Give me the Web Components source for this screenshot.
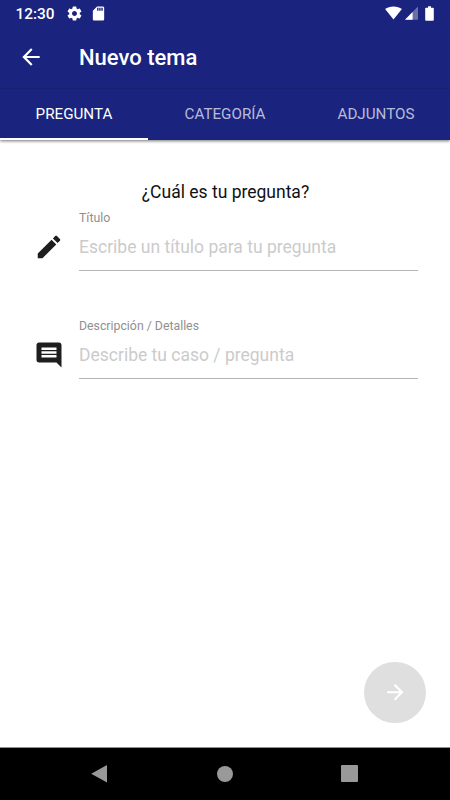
<!DOCTYPE html>
<html lang="es"><head><meta charset="utf-8"><title>Nuevo tema</title>
<style>html,body{margin:0;height:100%}body{font-family:Roboto,"Liberation Sans",sans-serif;background:#fff;overflow:hidden}</style>
</head><body>
<topic-screen></topic-screen>
<script>
function define(name, html) {
  const t = document.createElement('template');
  t.innerHTML = html;
  customElements.define(name, class extends HTMLElement {
    constructor() {
      super();
      this.attachShadow({mode: 'open'}).append(t.content.cloneNode(true));
    }
  });
}

define('status-bar', `
<style>
:host{display:flex;align-items:center;height:26px;padding:0 16px 0 15.5px;box-sizing:border-box;color:#fff}
.time{font-size:15.4px;line-height:26px;width:50px;font-weight:500;padding-top:2px}
svg{display:block;fill:#fff}
.sd{margin-left:7px}.wifi{margin-left:auto}.cell{margin-left:3px}.bat{margin-left:7px}
</style>
<span class="time">12:30</span>
<svg width="17" height="17" viewBox="0 0 24 24"><path d="M19.43 12.98c.04-.32.07-.64.07-.98s-.03-.66-.07-.98l2.11-1.65c.19-.15.24-.42.12-.64l-2-3.46c-.12-.22-.39-.3-.61-.22l-2.49 1c-.52-.4-1.08-.73-1.69-.98l-.38-2.65C14.46 2.18 14.25 2 14 2h-4c-.25 0-.46.18-.49.42l-.38 2.65c-.61.25-1.17.59-1.69.98l-2.49-1c-.23-.09-.49 0-.61.22l-2 3.46c-.13.22-.07.49.12.64l2.11 1.65c-.04.32-.07.65-.07.98s.03.66.07.98l-2.11 1.65c-.19.15-.24.42-.12.64l2 3.46c.12.22.39.3.61.22l2.49-1c.52.4 1.08.73 1.69.98l.38 2.65c.03.24.24.42.49.42h4c.25 0 .46-.18.49-.42l.38-2.65c.61-.25 1.17-.59 1.69-.98l2.49 1c.23.09.49 0 .61-.22l2-3.46c.12-.22.07-.49-.12-.64l-2.11-1.65zM12 15.5c-1.93 0-3.5-1.57-3.5-3.5s1.57-3.5 3.5-3.5 3.5 1.57 3.5 3.5-1.57 3.5-3.5 3.5z"/></svg>
<svg class="sd" width="17" height="17" viewBox="0 0 24 24"><path d="M18 2h-8L4.02 8 4 20c0 1.1.9 2 2 2h12c1.1 0 2-.9 2-2V4c0-1.1-.9-2-2-2zm-6 6h-2V4h2v4zm3 0h-2V4h2v4zm3 0h-2V4h2v4z"/></svg>
<svg class="wifi" width="17" height="14" viewBox="0 0 17 14"><path d="M8.5 13.5 16.9 3.1C14.7 1.4 11.8.4 8.5.4S2.3 1.4.1 3.1z"/></svg>
<svg class="cell" width="13" height="14" viewBox="0 0 13 14"><path opacity=".35" d="M0 13.7 13 .5v13.2z"/><path d="M0 13.7 7.6 6v7.7z"/></svg>
<svg class="bat" width="9" height="15" viewBox="0 0 9 15"><path d="M3 .3h3v1.5h2c.5 0 .8.3.8.8v11.2c0 .5-.3.9-.8.9H1c-.5 0-.8-.4-.8-.9V2.600c0-.5.3-.8.8-.8h2z"/></svg>
`);

define('app-bar', `
<style>
:host{display:flex;align-items:center;height:61.500px;padding-left:17.500px;box-sizing:border-box;color:#fff}
svg{display:block;fill:#fff;margin-right:35.500px}
h1{font-size:22px;font-weight:500;line-height:30px;margin:3px 0 0}
</style>
<svg width="26" height="26" viewBox="0 0 24 24"><path d="M20 11H7.830l5.590-5.590L12 4l-8 8 8 8 1.410-1.410L7.830 13H20v-2z"/></svg>
<h1><slot></slot></h1>
`);

define('tab-item', `
<style>
:host{display:flex;align-items:center;justify-content:center;box-sizing:border-box;height:51.500px;padding-top:1.500px;font-size:15.2px;color:rgba(255,255,255,.7);border-bottom:2px solid transparent}
:host([selected]){color:#fff;border-bottom-color:#fff}
</style><slot></slot>`);

define('tab-bar', `
<style>
:host{display:grid;grid-template-columns:148px 154px 148px;height:52.500px;box-sizing:border-box;border-top:1px solid #191f73}
</style><slot></slot>`);

define('text-field', `
<style>
:host{display:grid;grid-template-columns:31px 338.500px;column-gap:14px;width:383.500px;height:60px}
.icon{margin:21px 0 0 -.3px}
.field{border-bottom:1px solid #b5b5b5;height:59px}
label{display:block;font-size:12.300px;line-height:14px;color:#8f8f8f}
.hint{font-size:17.500px;line-height:24px;color:#cbcbcb;margin-top:10px;white-space:nowrap}
</style>
<div class="icon"><slot name="icon"></slot></div>
<div class="field"><label><slot name="label"></slot></label><div class="hint"><slot></slot></div></div>
`);

define('next-button', `
<style>
:host{display:flex;align-items:center;justify-content:center;width:61.500px;height:61.500px;border-radius:50%;background:#dfdfdf}
svg{display:block;fill:#fff}
</style>
<svg width="24.500" height="24.500" viewBox="0 0 24 24"><path d="M12 4l-1.410 1.410L16.170 11H4v2h12.170l-5.580 5.590L12 20l8-8z"/></svg>
`);

define('nav-bar', `
<style>
:host{display:flex;justify-content:space-between;align-items:center;height:53px;box-sizing:border-box;padding:0 92px 1px 90px;background:#000;border-top:1px solid #8f8f8f}
svg{display:block;fill:#999}
</style>
<svg width="18" height="19" viewBox="0 0 18 19"><path d="M17 1v17.500L1.200 9.700z"/></svg>
<svg width="16" height="16" viewBox="0 0 16 16"><circle cx="8" cy="8" r="8"/></svg>
<svg width="17" height="17" viewBox="0 0 17 17"><rect width="17" height="17" rx="1"/></svg>
`);

define('topic-screen', `
<style>
:host{display:flex;flex-direction:column;width:450px;height:800px}
header{background:#1a237e;height:140px;flex:none;box-shadow:0 1px 3px rgba(0,0,0,.55)}
main{flex:1;display:flex;flex-direction:column;padding:39.500px 24.200px 24px 34px}
h2{font-size:17.500px;font-weight:400;line-height:24px;margin:0 0 7.500px;width:383px;text-align:center;color:#111}
text-field+text-field{margin-top:48px}
next-button{margin:auto 0 0 auto}
svg{display:block;fill:#1e1e1e}
</style>
<header>
<status-bar></status-bar>
<app-bar>Nuevo tema</app-bar>
<tab-bar><tab-item selected>PREGUNTA</tab-item><tab-item>CATEGORÍA</tab-item><tab-item>ADJUNTOS</tab-item></tab-bar>
</header>
<main>
<h2>¿Cuál es tu pregunta?</h2>
<text-field><svg slot="icon" width="30" height="30" viewBox="0 0 24 24"><path d="M3 17.250V21h3.750L17.810 9.940l-3.750-3.750L3 17.250zM20.710 7.040c.39-.39.39-1.020 0-1.410l-2.340-2.340c-.39-.39-1.020-.39-1.410 0l-1.830 1.830 3.750 3.750 1.830-1.830z"/></svg><span slot="label">Título</span>Escribe un título para tu pregunta</text-field>
<text-field><svg slot="icon" width="30" height="30" viewBox="0 0 24 24"><path d="M21.990 4c0-1.100-.89-2-1.990-2H4c-1.100 0-2 .9-2 2v12c0 1.100.9 2 2 2h14l4 4-.01-18zM18 14H6v-2h12v2zm0-3H6V9h12v2zm0-3H6V6h12v2z"/></svg><span slot="label">Descripción / Detalles</span>Describe tu caso / pregunta</text-field>
<next-button></next-button>
</main>
<nav-bar></nav-bar>
`);
</script>
</body></html>
